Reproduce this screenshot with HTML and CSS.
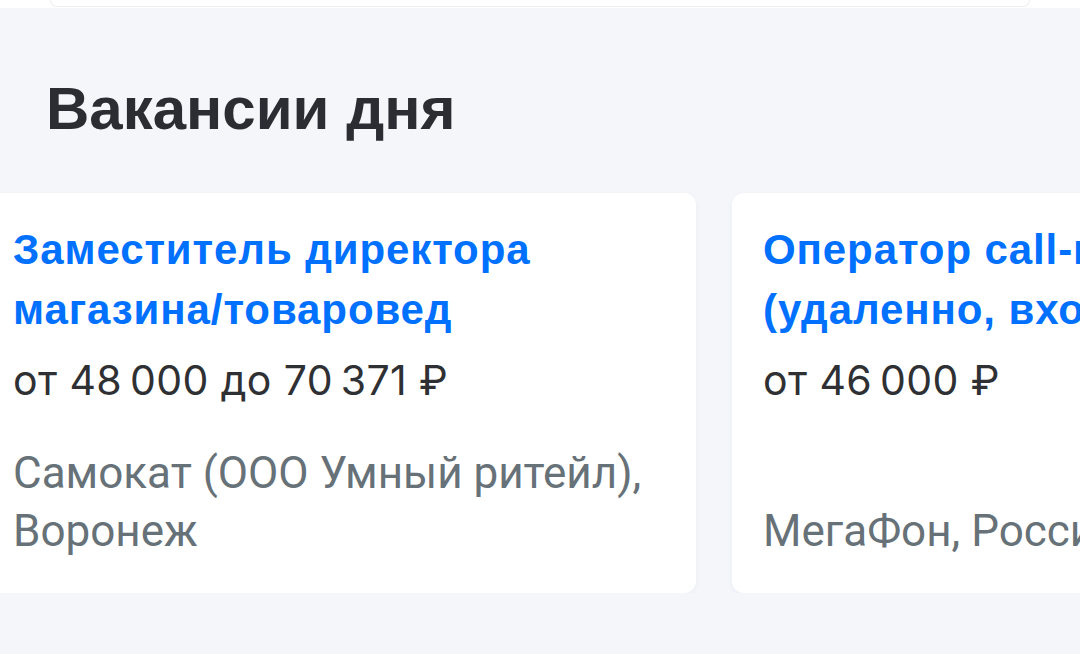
FILE: index.html
```html
<!DOCTYPE html>
<html>
  <head>
    <title>Вакансии дня</title>
    <link rel="stylesheet" href="styles.css">
  </head>
  <body>
    <div class="topBar">
      <div class="topCard"></div>
    </div>
    <section class="daily">
      <h2 class="dailyTitle">Вакансии дня</h2>
      <div class="vacancyRow">
        <div class="vacancyCard">
          <a class="vacancyName" href="#">Заместитель директора магазина/товаровед</a>
          <div class="vacancySalary">от 48&#8201;000 до 70&#8201;371 ₽</div>
          <div class="vacancyCompany">Самокат (ООО Умный ритейл), Воронеж</div>
        </div>
        <div class="vacancyCard">
          <a class="vacancyName" href="#">Оператор call-центра (удаленно, входящие звонки)</a>
          <div class="vacancySalary">от 46&#8201;000 ₽</div>
          <div class="vacancyCompany">МегаФон, Россия</div>
        </div>
      </div>
    </section>
  </body>
</html>
```
FILE: styles.css
```css
body { margin: 0; background: #f4f6fa; font-family: "Liberation Sans", Arial, sans-serif; overflow: hidden; }

.topBar { background: #fff; height: 8px; display: flex; justify-content: center; }
.topCard {
  width: 980px;
  height: 7px;
  border: 1.5px solid #eceef2;
  border-top: none;
  border-radius: 0 0 14px 14px;
  box-sizing: border-box;
}

.daily { padding-top: 66px; }
.dailyTitle {
  margin: 0 0 49px 46px;
  font-size: 60px;
  line-height: 70px;
  font-weight: bold;
  color: #2b2d33;
}

.vacancyRow { display: flex; gap: 36px; margin-left: -18px; }
.vacancyCard {
  flex: 0 0 714px;
  height: 400px;
  box-sizing: border-box;
  padding: 27px 31px 33px;
  background: #fff;
  border-radius: 12px;
  box-shadow: 0 2px 6px rgba(20, 40, 90, 0.04);
  display: flex;
  flex-direction: column;
  overflow: hidden;
}
.vacancyName {
  color: #0070ff;
  text-decoration: none;
  font-weight: bold;
  font-size: 42px;
  line-height: 60px;
  letter-spacing: 0.9px;
}
.vacancySalary {
  margin-top: 10px;
  font-family: Inter, "Noto Sans", sans-serif;
  font-size: 41px;
  line-height: 60px;
  letter-spacing: 0.4px;
  color: #2f3033;
}
.vacancyCompany {
  margin-top: auto;
  font-family: Roboto, "Noto Sans", sans-serif;
  font-size: 44px;
  line-height: 58px;
  color: #677178;
}
```
